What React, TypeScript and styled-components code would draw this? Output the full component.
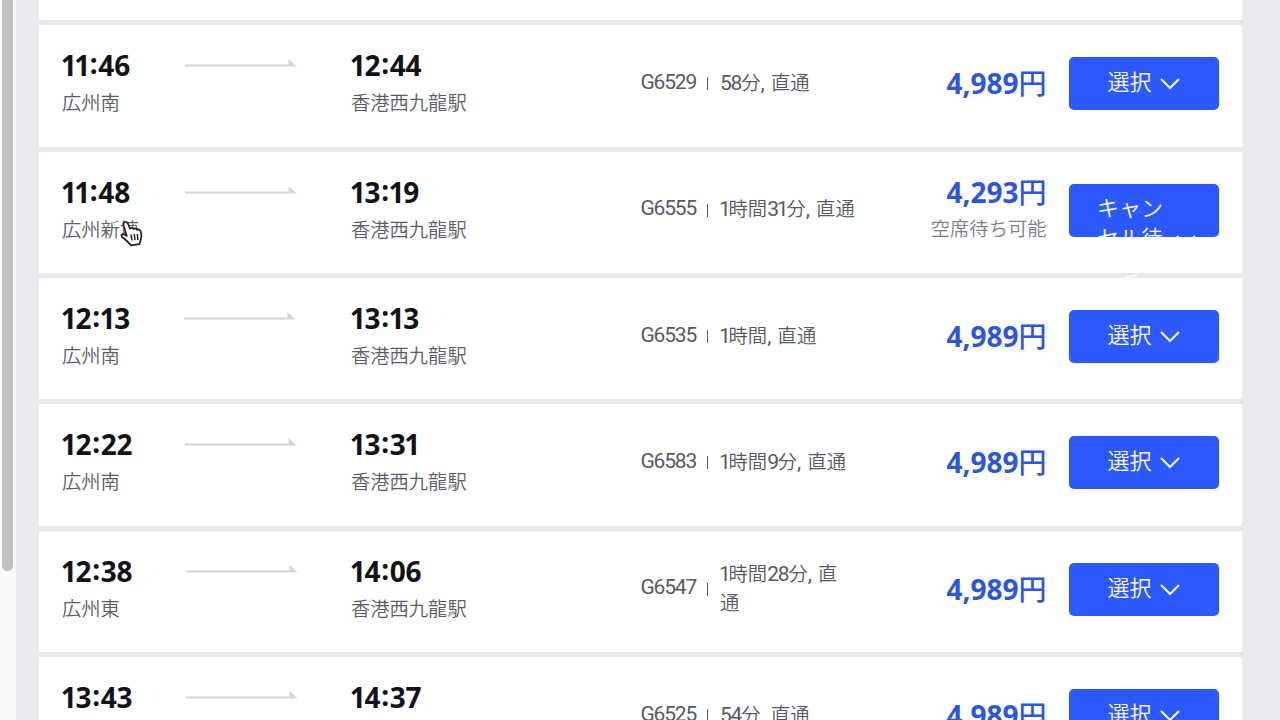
import * as React from 'react';
import styled, {createGlobalStyle, css} from 'styled-components';

//region [[ Styles ]]

const GlobalStyle = createGlobalStyle`
  * {
    box-sizing: border-box;
  }
  body {
    margin: 0;
    overflow: hidden;
    background: #e8eaee;
    font-family: "Noto Sans", "Noto Sans CJK JP", sans-serif;
  }
`;

const Page = styled.div`
  position: relative;
  display: flex;
  width: 1280px;
  height: 720px;
  overflow: hidden;
  background: #e8eaee;
`;

const ScrollTrack = styled.div`
  flex: none;
  width: 15.6px;
  height: 100%;
  padding-left: 2px;
  background: #fafafa;
`;

const ScrollThumb = styled.div`
  width: 11px;
  height: 571px;
  border-radius: 0 0 6px 6px;
  background: #c1c1c1;
`;

const TrainList = styled.div`
  display: flex;
  flex: none;
  flex-direction: column;
  gap: 5.25px;
  width: 1202.4px;
  height: 720px;
  margin-left: 23.9px;
  overflow: hidden;
  background: #e8e9eb;
`;

const PreviousRow = styled.div`
  flex: none;
  height: 20.2px;
  background: white;
`;

const Row = styled.div`
  display: grid;
  flex: none;
  grid-template-columns: 122px 167px 289.5px 66.5px 13px 150px 199.5px 150px;
  height: 121.1px;
  padding-left: 22.5px;
  background: white;
`;

const Stop = styled.div`
  padding-top: 20px;
  white-space: nowrap;
`;

const Time = styled.div`
  height: 40px;
  line-height: 40px;
  font-size: 28px;
  font-weight: 700;
  letter-spacing: -0.15px;
  color: #111319;
`;

const SmallText = styled.div`
  height: 34px;
  line-height: 34px;
  font-family: "Noto Sans CJK JP", sans-serif;
  font-size: 19.3px;
  font-weight: 350;
  color: #5a5e66;
`;

const NarrowOne = styled.span<{ $trim: number }>`
  ${({ $trim }) => css`
    margin-left: -${$trim / 2}px;
    margin-right: -${$trim / 2}px;
  `}
`;

const Colon = styled.span`
  position: relative;
  top: -2px;
  margin: 0 0.8px;
`;

const ArrowArea = styled.div<{ $shift: number }>`
  ${({ $shift }) => css`
    padding-top: 33px;
    padding-left: ${1.2 + $shift}px;
  `}
`;

const ArrowLine = styled.svg`
  display: block;
`;

const Detail = styled.div`
  display: flex;
  align-items: center;
  height: 114px;
  font-family: "Noto Sans CJK JP", sans-serif;
  font-size: 19.3px;
  font-weight: 350;
  line-height: 29px;
  color: #565a62;
  white-space: pre;
`;

const Latin = styled.span`
  font-family: Roboto, sans-serif;
  font-size: 21px;
  font-weight: 400;
  line-height: 1;
  letter-spacing: -1.2px;
  word-spacing: 3.5px;
`;

const Divider = styled.div`
  width: 1.5px;
  height: 13px;
  margin-top: 3px;
  background: #5a5e66;
`;

const PriceArea = styled.div<{ $stacked: boolean }>`
  ${({ $stacked }) => css`
    padding-top: ${$stacked ? 19 : 37}px;
    padding-right: 23px;
    text-align: right;
    white-space: nowrap;
  `}
`;

const Price = styled.div`
  height: 40px;
  line-height: 40px;
  font-size: 28px;
  font-weight: 700;
  color: #2b57e0;
`;

const Yen = styled.span`
  font-family: "Noto Sans CJK JP", sans-serif;
  font-weight: 500;
`;

const SeatNote = styled(SmallText)`
  color: #7d8188;
`;

const SelectButton = styled.button<{ $waitlist: boolean }>`
  ${({ $waitlist }) => css`
    display: flex;
    align-items: flex-start;
    align-self: start;
    justify-content: center;
    gap: ${$waitlist ? 12 : 8}px;
    width: 150px;
    height: 53px;
    margin-top: 32px;
    padding: ${$waitlist ? '7.5px 0 0 5px' : '8px 0 0'};
    border: none;
    border-radius: 5px;
    font-family: "Noto Sans CJK JP", sans-serif;
    font-size: 22px;
    font-weight: 350;
    line-height: 30px;
    color: white;
    background: #2b58ff;
    cursor: pointer;
  `}
`;

const ButtonLabel = styled.span<{ $waitlist: boolean }>`
  ${({ $waitlist }) => css`
    flex: none;
    width: ${$waitlist ? '66px' : 'auto'};
    text-align: center;
    white-space: pre;
  `}
`;

const Chevron = styled.svg<{ $waitlist: boolean }>`
  ${({ $waitlist }) => css`
    flex: none;
    margin-top: ${$waitlist ? 42.5 : 12}px;
  `}
`;

const Pointer = styled.svg`
  position: absolute;
  left: 120px;
  top: 220px;
`;

//endregion [[ Styles ]]

//region [[ Props ]]

interface Train {
  departure: string;
  from: string;
  arrival: string;
  to: string;
  number: string;
  duration: string;
  price: string;
  note?: string;
  arrowShift: number;
}

//endregion [[ Props ]]

//region [[ Functions ]]

const trains: Train[] = [
  { departure: '11:46', from: '広州南', arrival: '12:44', to: '香港西九龍駅', number: 'G6529', duration: '58分, 直通', price: '4,989', arrowShift: 0 },
  { departure: '11:48', from: '広州新塘', arrival: '13:19', to: '香港西九龍駅', number: 'G6555', duration: '1時間31分, 直通', price: '4,293', note: '空席待ち可能', arrowShift: 0 },
  { departure: '12:13', from: '広州南', arrival: '13:13', to: '香港西九龍駅', number: 'G6535', duration: '1時間, 直通', price: '4,989', arrowShift: -1.5 },
  { departure: '12:22', from: '広州南', arrival: '13:31', to: '香港西九龍駅', number: 'G6583', duration: '1時間9分, 直通', price: '4,989', arrowShift: 0 },
  { departure: '12:38', from: '広州東', arrival: '14:06', to: '香港西九龍駅', number: 'G6547', duration: '1時間28分, 直\n通', price: '4,989', arrowShift: 1 },
  { departure: '13:43', from: '広州南', arrival: '14:37', to: '香港西九龍駅', number: 'G6525', duration: '54分, 直通', price: '4,989', arrowShift: 1 },
];

// the figure 1 sits closer to its neighbours than the other figures
const tighten = (text: string, trim: number) =>
  text.split(/([1:])/).map((part, i) => {
    if (part === '1') return <NarrowOne key={i} $trim={trim}>1</NarrowOne>;
    if (part === ':') return <Colon key={i}>:</Colon>;
    return part;
  });

const mixed = (text: string) =>
  text.split(/([\d, ]+)/).map((part, i) => /^[\d, ]+$/.test(part) ? <Latin key={i}>{tighten(part, 2)}</Latin> : part);

//endregion [[ Functions ]]

const Arrow = () => (
  <ArrowLine width="112" height="10" viewBox="0 0 112 10">
    <path d="M0 6.4H103.5V1L111.5 8.6H0Z" fill="#d3d6dc"/>
  </ArrowLine>
);

const TrainRow = ({ train }: { train: Train }) => {
  const waitlist = !!train.note;
  return <Row>
    <Stop>
      <Time>{tighten(train.departure, 2.4)}</Time>
      <SmallText>{train.from}</SmallText>
    </Stop>
    <ArrowArea $shift={train.arrowShift}><Arrow/></ArrowArea>
    <Stop>
      <Time>{tighten(train.arrival, 2.4)}</Time>
      <SmallText>{train.to}</SmallText>
    </Stop>
    <Detail><Latin>{train.number}</Latin></Detail>
    <Detail><Divider/></Detail>
    <Detail><div>{mixed(train.duration)}</div></Detail>
    <PriceArea $stacked={waitlist}>
      <Price>{train.price}<Yen>円</Yen></Price>
      {waitlist && <SeatNote>{train.note}</SeatNote>}
    </PriceArea>
    <SelectButton $waitlist={waitlist}>
      <ButtonLabel $waitlist={waitlist}>{waitlist ? 'キャン\nセル待\nち' : '選択'}</ButtonLabel>
      <Chevron $waitlist={waitlist} width="22" height="14" viewBox="0 0 22 14">
        <path d="M2 2L11 11L20 2" fill="none" stroke="white" strokeWidth="2"/>
      </Chevron>
    </SelectButton>
  </Row>;
};

export default function App() {
  return <Page>
    <GlobalStyle/>
    <ScrollTrack><ScrollThumb/></ScrollTrack>
    <TrainList>
      <PreviousRow/>
      {trains.map((train) => <TrainRow key={train.number} train={train}/>)}
    </TrainList>
    <Pointer width="24" height="28" viewBox="0 0 24 28">
      <path
        d="M4.2 2.2C5.6 1.2 7.3 2 7.9 3.7L10.1 8.6C11 7.6 12.8 7.8 13.5 9C14.8 8 16.5 8.5 17.1 9.8C18.8 9 20.4 10 20.8 11.8C21.5 14.4 21.7 16.6 20.9 19L19.4 24.2L11 25.3C8.6 22.7 6.3 20.1 3.6 18.2C2 17.1 1.1 15.8 1.9 14.9C3 13.8 4.9 14.4 6.8 15.9L3.8 6.2C3.2 4.4 3.2 3 4.2 2.2Z"
        fill="white" stroke="#222" strokeWidth="1.7" strokeLinejoin="round"
      />
      <path d="M11 14.5L12 20.5M14.2 14.2L15 20.2M17.3 14L17.9 20" fill="none" stroke="#222" strokeWidth="1.5"/>
    </Pointer>
  </Page>;
}
